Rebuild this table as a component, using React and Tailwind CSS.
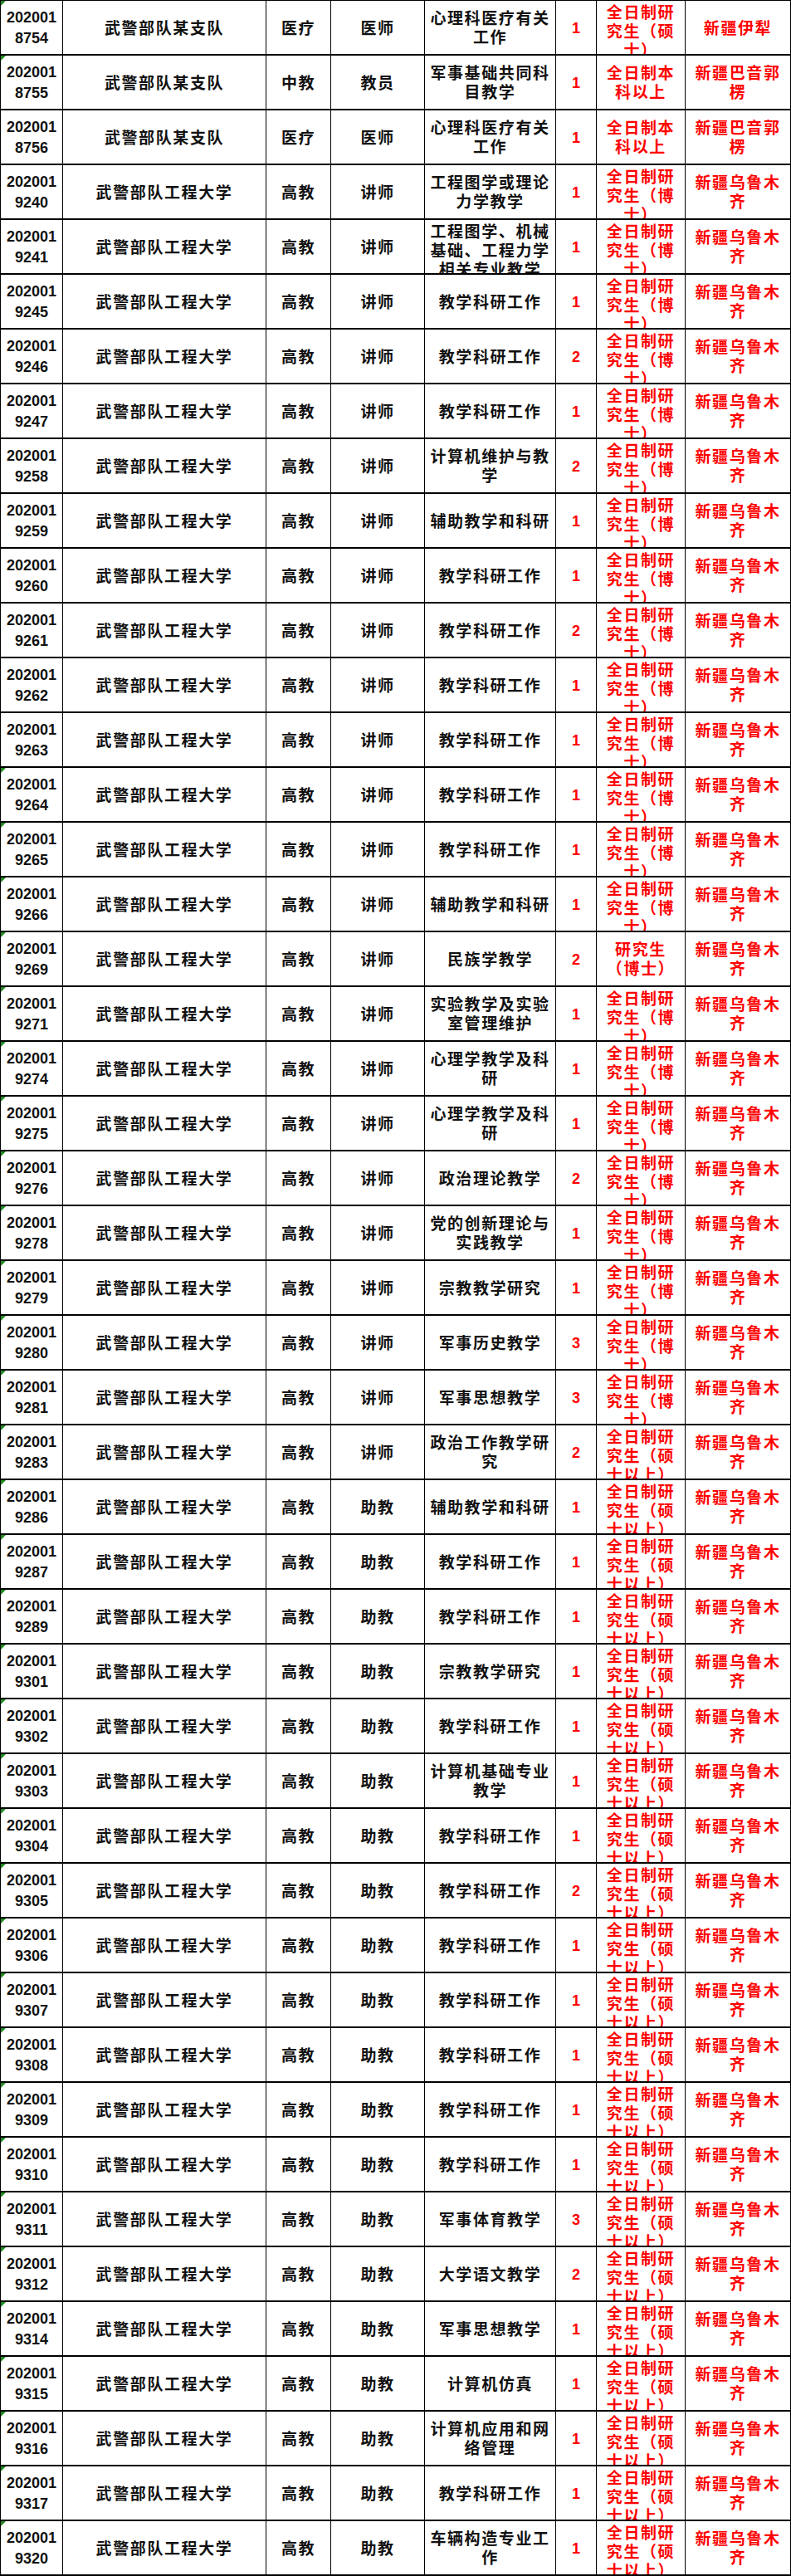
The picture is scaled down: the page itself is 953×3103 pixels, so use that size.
const PHD = '全日制研究生（博士）';
const MASTER = '全日制研究生（硕士以上）';
const URUMQI = '新疆乌鲁木齐';
const UNI = '武警部队工程大学';

// [id, unit, type, title, duty, count, degree, place, flag]
const rows = [
  ['2020018754', '武警部队某支队', '医疗', '医师', '心理科医疗有关工作', 1, '全日制研究生（硕士）', '新疆伊犁', true],
  ['2020018755', '武警部队某支队', '中教', '教员', '军事基础共同科目教学', 1, '全日制本科以上', '新疆巴音郭楞', true],
  ['2020018756', '武警部队某支队', '医疗', '医师', '心理科医疗有关工作', 1, '全日制本科以上', '新疆巴音郭楞', false],
  ['2020019240', UNI, '高教', '讲师', '工程图学或理论力学教学', 1, PHD, URUMQI, false],
  ['2020019241', UNI, '高教', '讲师', '工程图学、机械基础、工程力学相关专业教学', 1, PHD, URUMQI, false],
  ['2020019245', UNI, '高教', '讲师', '教学科研工作', 1, PHD, URUMQI, false],
  ['2020019246', UNI, '高教', '讲师', '教学科研工作', 2, PHD, URUMQI, false],
  ['2020019247', UNI, '高教', '讲师', '教学科研工作', 1, PHD, URUMQI, false],
  ['2020019258', UNI, '高教', '讲师', '计算机维护与教学', 2, PHD, URUMQI, false],
  ['2020019259', UNI, '高教', '讲师', '辅助教学和科研', 1, PHD, URUMQI, false],
  ['2020019260', UNI, '高教', '讲师', '教学科研工作', 1, PHD, URUMQI, false],
  ['2020019261', UNI, '高教', '讲师', '教学科研工作', 2, PHD, URUMQI, false],
  ['2020019262', UNI, '高教', '讲师', '教学科研工作', 1, PHD, URUMQI, false],
  ['2020019263', UNI, '高教', '讲师', '教学科研工作', 1, PHD, URUMQI, false],
  ['2020019264', UNI, '高教', '讲师', '教学科研工作', 1, PHD, URUMQI, true],
  ['2020019265', UNI, '高教', '讲师', '教学科研工作', 1, PHD, URUMQI, true],
  ['2020019266', UNI, '高教', '讲师', '辅助教学和科研', 1, PHD, URUMQI, true],
  ['2020019269', UNI, '高教', '讲师', '民族学教学', 2, '研究生（博士）', URUMQI, true],
  ['2020019271', UNI, '高教', '讲师', '实验教学及实验室管理维护', 1, PHD, URUMQI, true],
  ['2020019274', UNI, '高教', '讲师', '心理学教学及科研', 1, PHD, URUMQI, true],
  ['2020019275', UNI, '高教', '讲师', '心理学教学及科研', 1, PHD, URUMQI, true],
  ['2020019276', UNI, '高教', '讲师', '政治理论教学', 2, PHD, URUMQI, true],
  ['2020019278', UNI, '高教', '讲师', '党的创新理论与实践教学', 1, PHD, URUMQI, true],
  ['2020019279', UNI, '高教', '讲师', '宗教教学研究', 1, PHD, URUMQI, true],
  ['2020019280', UNI, '高教', '讲师', '军事历史教学', 3, PHD, URUMQI, true],
  ['2020019281', UNI, '高教', '讲师', '军事思想教学', 3, PHD, URUMQI, true],
  ['2020019283', UNI, '高教', '讲师', '政治工作教学研究', 2, MASTER, URUMQI, true],
  ['2020019286', UNI, '高教', '助教', '辅助教学和科研', 1, MASTER, URUMQI, true],
  ['2020019287', UNI, '高教', '助教', '教学科研工作', 1, MASTER, URUMQI, true],
  ['2020019289', UNI, '高教', '助教', '教学科研工作', 1, MASTER, URUMQI, true],
  ['2020019301', UNI, '高教', '助教', '宗教教学研究', 1, MASTER, URUMQI, true],
  ['2020019302', UNI, '高教', '助教', '教学科研工作', 1, MASTER, URUMQI, true],
  ['2020019303', UNI, '高教', '助教', '计算机基础专业教学', 1, MASTER, URUMQI, true],
  ['2020019304', UNI, '高教', '助教', '教学科研工作', 1, MASTER, URUMQI, true],
  ['2020019305', UNI, '高教', '助教', '教学科研工作', 2, MASTER, URUMQI, true],
  ['2020019306', UNI, '高教', '助教', '教学科研工作', 1, MASTER, URUMQI, true],
  ['2020019307', UNI, '高教', '助教', '教学科研工作', 1, MASTER, URUMQI, true],
  ['2020019308', UNI, '高教', '助教', '教学科研工作', 1, MASTER, URUMQI, true],
  ['2020019309', UNI, '高教', '助教', '教学科研工作', 1, MASTER, URUMQI, true],
  ['2020019310', UNI, '高教', '助教', '教学科研工作', 1, MASTER, URUMQI, true],
  ['2020019311', UNI, '高教', '助教', '军事体育教学', 3, MASTER, URUMQI, true],
  ['2020019312', UNI, '高教', '助教', '大学语文教学', 2, MASTER, URUMQI, true],
  ['2020019314', UNI, '高教', '助教', '军事思想教学', 1, MASTER, URUMQI, true],
  ['2020019315', UNI, '高教', '助教', '计算机仿真', 1, MASTER, URUMQI, true],
  ['2020019316', UNI, '高教', '助教', '计算机应用和网络管理', 1, MASTER, URUMQI, true],
  ['2020019317', UNI, '高教', '助教', '教学科研工作', 1, MASTER, URUMQI, true],
  ['2020019320', UNI, '高教', '助教', '车辆构造专业工作', 1, MASTER, URUMQI, true],
];

function Cell({ children, className = '', top = false }) {
  return (
    <div
      className={`relative flex justify-center overflow-hidden border-r border-black text-center ${
        top ? 'items-start pt-[3px]' : 'items-center pt-[2px]'
      } ${className}`}
    >
      {children}
    </div>
  );
}

export default function App() {
  return (
    <div className="w-[953px] border-l border-t border-black bg-white font-['Liberation_Sans','Noto_Sans_CJK_SC',sans-serif] font-bold">
      {rows.map(([id, unit, type, title, duty, count, degree, place, flag]) => (
        <div
          key={id}
          className="grid h-[66px] grid-cols-[75px_245px_78px_113px_158px_49px_107px_127px] border-b-2 border-black"
        >
          <Cell className="text-[18px] leading-[25px] text-[#111]">
            {flag && (
              <span className="absolute left-0 top-0 h-0 w-0 border-r-[6px] border-t-[6px] border-r-transparent border-t-[#1f8a1f]" />
            )}
            <span>
              {id.slice(0, 6)}
              <br />
              {id.slice(6)}
            </span>
          </Cell>
          <Cell className="text-[19px] leading-[23px] tracking-[1.6px] text-[#111]">{unit}</Cell>
          <Cell className="text-[19px] leading-[23px] tracking-[1.6px] text-[#111]">{type}</Cell>
          <Cell className="text-[19px] leading-[23px] tracking-[1.6px] text-[#111]">{title}</Cell>
          <Cell top={duty.length > 14} className="px-[5px] text-[19px] leading-[23px] tracking-[1.6px] text-[#111]">
            {duty}
          </Cell>
          <Cell className="text-[18px] text-[#ff0000]">{count}</Cell>
          <Cell top={degree.length > 8} className="px-[6px] text-[19px] leading-[23px] tracking-[1.6px] text-[#ff0000]">
            {degree}
          </Cell>
          <Cell className="px-[4px] text-[19px] leading-[23px] tracking-[1.6px] text-[#ff0000]">{place}</Cell>
        </div>
      ))}
    </div>
  );
}
